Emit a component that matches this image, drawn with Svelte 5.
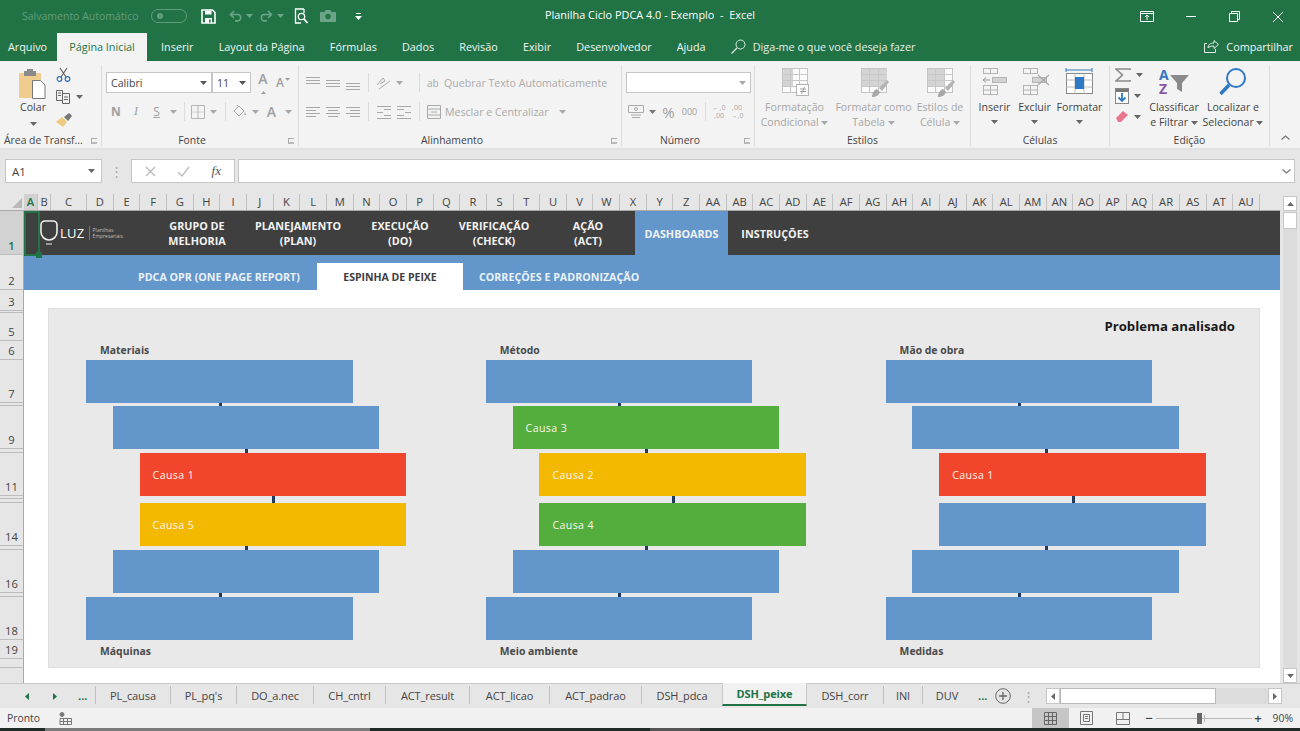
<script>
  const tabs = ['Inserir', 'Layout da Página', 'Fórmulas', 'Dados', 'Revisão', 'Exibir', 'Desenvolvedor', 'Ajuda'];

  const letters = 'ABCDEFGHIJKLMNOPQRSTUVWXYZ'.split('');
  const columns = [...letters, ...letters.slice(0, 21).map((l) => 'A' + l)];

  const rows = [
    { n: 1, h: 44, sel: true }, { n: 2, h: 35 }, { n: 3, h: 21 }, { n: '', h: 2 }, { n: 5, h: 28 },
    { n: 6, h: 19 }, { n: 7, h: 43 }, { n: '', h: 3 }, { n: 9, h: 43 }, { n: '', h: 4 }, { n: 11, h: 43 },
    { n: '', h: 3 }, { n: '', h: 4 }, { n: 14, h: 43 }, { n: '', h: 4 }, { n: 16, h: 43 }, { n: '', h: 4 },
    { n: 18, h: 43 }, { n: 19, h: 19 }, { n: '', h: 9 }
  ];

  const navItems = [
    ['GRUPO DE', 'MELHORIA'], ['PLANEJAMENTO', '(PLAN)'], ['EXECUÇÃO', '(DO)'],
    ['VERIFICAÇÃO', '(CHECK)'], ['AÇÃO', '(ACT)']
  ];

  // gap = px between this bar and the previous one, lvl = how far it is indented
  const levels = [
    { lvl: 0, gap: 0 }, { lvl: 1, gap: 3, tick: 0 }, { lvl: 2, gap: 4, tick: 1 },
    { lvl: 2, gap: 7, tick: 2 }, { lvl: 1, gap: 4, tick: 1 }, { lvl: 0, gap: 4, tick: 0 }
  ];
  const INDENT = 26.8;

  const fishbone = [
    { top: 'Materiais', bottom: 'Máquinas', causes: { 2: ['Causa 1', 'red'], 3: ['Causa 5', 'yellow'] } },
    { top: 'Método', bottom: 'Meio ambiente', causes: { 1: ['Causa 3', 'green'], 2: ['Causa 2', 'yellow'], 3: ['Causa 4', 'green'] } },
    { top: 'Mão de obra', bottom: 'Medidas', causes: { 2: ['Causa 1', 'red'] } }
  ];

  const sheets = [
    ['PL_causa', 75], ["PL_pq's", 66], ['DO_a.nec', 77], ['CH_cntrl', 72], ['ACT_result', 84], ['ACT_licao', 80],
    ['ACT_padrao', 92], ['DSH_pdca', 81], ['DSH_peixe', 85, true], ['DSH_corr', 76], ['INI', 39], ['DUV', 49]
  ];
</script>

{#snippet caret(c = '#a8a8a8')}
  <svg width="7" height="4" viewBox="0 0 7 4"><path d="M0 0h7L3.500 4z" fill={c} /></svg>
{/snippet}

{#snippet lines(ws, y0 = 2)}
  <svg width="16" height="14" viewBox="0 0 16 14" fill="none" stroke="#a8a8a8">
    {#each ws as w, i}
      <path d={`M${w[0]} ${y0 + i * 3 + 0.5}H${w[1]}`} />
    {/each}
  </svg>
{/snippet}

{#snippet tableIcon(fill, brush)}
  <svg width="30" height="32" viewBox="0 0 30 32" fill="none">
    <rect x="2.500" y="1.500" width="25" height="24" fill="#fbfbfb" stroke="#c4c4c4" />
    <rect x="3" y="2" width={fill} height="17" fill="#d4d4d4" />
    <path d="M2.500 7.500h25M2.500 13.500h25M2.500 19.500h25M10.500 1.500v24M19.500 1.500v24" stroke="#c8c8c8" />
    {#if brush}
      <path d="M13 30c0-4 2-7 5-8l3 3c-1 3-4 5-8 5z" fill="#a8a8a8" /><path d="M20 21l8-8 2 2-7 9z" fill="#b4b4b4" />
    {:else}
      <rect x="16.500" y="17.500" width="12" height="11" fill="#fff" stroke="#b4b4b4" />
      <path d="M20 22h6M20 24.500h6M24.500 20l-3 7" stroke="#9c9c9c" />
    {/if}
  </svg>
{/snippet}

{#snippet cellsIcon(kind)}
  <svg width="30" height="30" viewBox="0 0 30 30" fill="none" stroke="#b4b4b4">
    <rect x="3.500" y="1.500" width="14" height="5" />
    <path d="M10.500 1.500v5" />
    <rect x="3.500" y="18.500" width="14" height="9" />
    <path d="M3.500 23h14M10.500 18.500v9" />
    <rect x="12.500" y="10.500" width="14" height="5" fill="#d2d2d2" />
    {#if kind === 'ins'}
      <path d="M3 13h7M6 10.500L3 13l3 2.500" stroke="#999" />
    {:else}
      <path d="M18 8l11 10M29 8L18 18" stroke="#aaa" stroke-width="1.300" />
    {/if}
  </svg>
{/snippet}

<div class="app">
  <header class="titlebar">
    <div class="qat">
      <span class="autosave">Salvamento Automático</span>
      <span class="toggle"><i></i></span>
      <svg class="save" width="15" height="15" viewBox="0 0 15 15"><path d="M1 1h10.500L14 3.500V14H1z" fill="none" stroke="#fff" stroke-width="1.600" /><path d="M4 1.500h6.500v4H4zM4 9h7v5H4z" fill="#fff" /><rect x="8" y="10.500" width="1.600" height="3" fill="#217346" /></svg>
      <svg class="undo" width="13" height="12" viewBox="0 0 13 12" fill="none" stroke="#6ba587" stroke-width="1.600"><path d="M5 1L1.500 4.500 5 8M2 4.500h6.500a3.200 3.200 0 010 6.400H6" /></svg>
      <span class="qcaret">{@render caret('#6ba587')}</span>
      <svg class="redo" width="13" height="12" viewBox="0 0 13 12" fill="none" stroke="#6ba587" stroke-width="1.600"><path d="M8 1l3.500 3.500L8 8M11 4.500H4.500a3.200 3.200 0 000 6.400H7" /></svg>
      <span class="qcaret">{@render caret('#6ba587')}</span>
      <svg class="preview" width="15" height="17" viewBox="0 0 15 17" fill="none" stroke="#fff" stroke-width="1.300"><path d="M10 1H1.500v14H7M10 1v4" /><circle cx="7.500" cy="8.500" r="3.200" /><path d="M10 11l3.500 4" stroke-width="1.800" /></svg>
      <svg class="camera" width="16" height="12" viewBox="0 0 16 12"><path d="M0 2h4.500l1-2h5l1 2H16v10H0z" fill="#6ba587" /><circle cx="8" cy="6.500" r="2.700" fill="#217346" /></svg>
      <svg class="more" width="7" height="7" viewBox="0 0 7 7"><path d="M1 .500h5" stroke="#fff" /><path d="M0 3h7L3.500 7z" fill="#fff" /></svg>
    </div>
    <div class="doc-title">Planilha Ciclo PDCA 4.0 - Exemplo &nbsp;-&nbsp; Excel</div>
    <div class="win">
      <svg width="14" height="11" viewBox="0 0 14 11" fill="none" stroke="#fff"><path d="M.5.500h13v10H.5zM.5 2.500h13" /><path d="M7 9V4M5 6l2-2 2 2" /></svg>
      <svg width="11" height="11" viewBox="0 0 11 11"><path d="M0 5.500h10" stroke="#fff" /></svg>
      <svg width="11" height="11" viewBox="0 0 11 11" fill="none" stroke="#fff"><path d="M.5 2.500h8v8h-8zM2.500 2.500v-2h8v8h-2" /></svg>
      <svg width="12" height="12" viewBox="0 0 12 12"><path d="M1 1l10 10M11 1L1 11" stroke="#fff" /></svg>
    </div>
  </header>

  <nav class="tabbar">
    <span class="tab file">Arquivo</span>
    <span class="tab active">Página Inicial</span>
    {#each tabs as t}
      <span class="tab">{t}</span>
    {/each}
    <svg class="search" width="15" height="15" viewBox="0 0 15 15" fill="none" stroke="#dfeae4"><circle cx="9.500" cy="5.500" r="4.500" /><path d="M6 9l-5.500 5.500" stroke-width="1.300" /></svg>
    <span class="tell">Diga-me o que você deseja fazer</span>
    <span class="share">
      <svg width="15" height="14" viewBox="0 0 15 14" fill="none" stroke="#dfeae4"><path d="M3 4.500H.5v9h11V10" /><path d="M4 9c0-3 2-5 6-5V1.500l4.500 4-4.500 4V7C7 7 5 7.500 4 9z" /></svg>
      Compartilhar
    </span>
  </nav>

  <section class="ribbon">
    <div class="group g-clip">
      <div class="body clip-body">
        <div class="paste">
          <svg width="28" height="30" viewBox="0 0 28 30"><rect x="0" y="4" width="22" height="25" rx="1" fill="#efcd8e" /><rect x="5" y="2" width="12" height="5" fill="#8a8a8a" /><rect x="8" y="0" width="6" height="3" fill="#8a8a8a" /><path d="M13.500 11.500h8l4.500 4.500v13.500H13.500z" fill="#fff" stroke="#777" /></svg>
          <span class="dark">Colar</span>
          {@render caret('#666')}
        </div>
        <div class="clip-tools">
          <svg width="15" height="15" viewBox="0 0 15 15" fill="none"><path d="M4 1l6 9M11 1L5 10" stroke="#666" stroke-width="1.200" /><circle cx="3.500" cy="12" r="2.300" stroke="#2f6fb5" stroke-width="1.200" /><circle cx="11.500" cy="12" r="2.300" stroke="#2f6fb5" stroke-width="1.200" /></svg>
          <span class="with-caret">
            <svg width="15" height="14" viewBox="0 0 15 14" fill="none" stroke="#666"><path d="M.5.500h6v10h-6zM6.500 3.500h7v10h-7zM2 3h3M2 5.500h3M8 7h4M8 9.500h4" /></svg>
            {@render caret('#666')}
          </span>
          <svg width="17" height="15" viewBox="0 0 17 15"><path d="M0 10l6-5 5 5-4 5z" fill="#eec97f" /><path d="M8 5l5-4 3 3-4 5z" fill="#777" /></svg>
        </div>
      </div>
      <div class="label">Área de Transf...<i class="launch"></i></div>
    </div>

    <div class="group g-font">
      <div class="body stack">
        <div class="line first">
          <span class="select font-name">Calibri {@render caret('#555')}</span>
          <span class="select font-size">11 {@render caret('#555')}</span>
          <span class="grow-a big">A<svg width="5" height="3" viewBox="0 0 7 4"><path d="M0 4h7L3.500 0z" fill="#a0a0a0" /></svg></span>
          <span class="grow-a small">A<svg width="5" height="3" viewBox="0 0 7 4"><path d="M0 0h7L3.500 4z" fill="#a0a0a0" /></svg></span>
        </div>
        <div class="line">
          <b class="w20 tool bold">N</b>
          <i class="w20 tool ital">I</i>
          <u class="w21 tool">S</u>
          <span class="w12 tool">{@render caret()}</span>
          <span class="w10 tool"><em class="sep"></em></span>
          <span class="w18 tool"><svg width="14" height="14" viewBox="0 0 14 14" fill="none" stroke="#b4b4b4"><path d="M.5.500h13v13H.5zM7 .500v13" /><path d="M.5 7h13" stroke-dasharray="1 1" /></svg></span>
          <span class="w13 tool">{@render caret()}</span>
          <span class="w10 tool"><em class="sep"></em></span>
          <span class="w19 tool"><svg width="16" height="15" viewBox="0 0 16 15" fill="none"><path d="M2 7l5-5 5 5-5 5z" stroke="#aaa" /><path d="M5 1l2 2" stroke="#aaa" /><path d="M13 8l1.500 3h-3z" fill="#bbb" /></svg></span>
          <span class="w12 tool">{@render caret()}</span>
          <span class="w21 tool letter-a">A</span>
          <span class="w12 tool">{@render caret()}</span>
        </div>
      </div>
      <div class="label off">Fonte<i class="launch"></i></div>
    </div>

    <div class="group g-align">
      <div class="body stack">
        <div class="line first-mid">
          <span class="w20 tool">{@render lines([[1, 15], [1, 15], [1, 15]], 1)}</span>
          <span class="w20 tool">{@render lines([[1, 15], [1, 15], [1, 15]], 4)}</span>
          <span class="w20 tool">{@render lines([[1, 15], [1, 15], [1, 15]], 7)}</span>
          <span class="w10 tool"><em class="sep"></em></span>
          <span class="w20 tool"><svg width="16" height="15" viewBox="0 0 16 15" fill="none" stroke="#aaa"><path d="M2 10l6-7 2 3-5 3M4 14L15 6" /></svg></span>
          <span class="w12 tool">{@render caret()}</span>
          <span class="w9 tool"></span>
          <span class="w10 tool"><em class="sep"></em></span>
          <span class="wrap"><span class="ab">ab</span> Quebrar Texto Automaticamente</span>
        </div>
        <div class="line mid">
          <span class="w20 tool">{@render lines([[1, 15], [1, 11], [1, 15], [1, 11]])}</span>
          <span class="w20 tool">{@render lines([[1, 15], [3, 13], [1, 15], [3, 13]])}</span>
          <span class="w20 tool">{@render lines([[1, 15], [5, 15], [1, 15], [5, 15]])}</span>
          <span class="w10 tool"><em class="sep"></em></span>
          <span class="w21 tool">{@render lines([[1, 15], [8, 15], [1, 7], [8, 15], [1, 15]], 1)}</span>
          <span class="w20 tool">{@render lines([[1, 15], [1, 8], [9, 15], [1, 8], [1, 15]], 1)}</span>
          <span class="w10 tool"><em class="sep"></em></span>
          <span class="wrap">
            <svg width="14" height="14" viewBox="0 0 14 14" fill="none" stroke="#aaa"><path d="M.5.500h13v13H.5zM.5 4h13M.5 10h13M4 7h6" /></svg>
            Mesclar e Centralizar <span class="merge-caret">{@render caret()}</span>
          </span>
        </div>
      </div>
      <div class="label off">Alinhamento<i class="launch"></i></div>
    </div>

    <div class="group g-num">
      <div class="body stack">
        <div class="line first">
          <span class="select num-format">{@render caret()}</span>
        </div>
        <div class="line">
          <span class="w20 tool"><svg width="16" height="14" viewBox="0 0 16 14" fill="none" stroke="#aaa"><path d="M.5.500h15v7H.5zM3 10h10M4 12.500h8" /><circle cx="8" cy="4" r="1.500" /></svg></span>
          <span class="w12 tool">{@render caret('#777')}</span>
          <span class="w21 tool pct">%</span>
          <span class="w21 tool thou">000</span>
          <span class="w10 tool"><em class="sep"></em></span>
          <span class="w18 tool dec">←,0<br />,00</span>
          <span class="w18 tool dec">,00<br />→,0</span>
        </div>
      </div>
      <div class="label off">Número<i class="launch"></i></div>
    </div>

    <div class="group g-styles">
      <div class="body big-row">
        <div class="big f-cond">
          <div class="ico">{@render tableIcon(10, false)}</div>
          <span>Formatação<br />Condicional <span class="cr">{@render caret()}</span></span>
        </div>
        <div class="big f-table">
          <div class="ico">{@render tableIcon(25, true)}</div>
          <span>Formatar como<br />Tabela <span class="cr">{@render caret()}</span></span>
        </div>
        <div class="big f-cell">
          <div class="ico">{@render tableIcon(17, true)}</div>
          <span>Estilos de<br />Célula <span class="cr">{@render caret()}</span></span>
        </div>
      </div>
      <div class="label">Estilos</div>
    </div>

    <div class="group g-cells">
      <div class="body big-row">
        <div class="big on c-ins">
          <div class="ico">{@render cellsIcon('ins')}</div>
          <span>Inserir</span>
          <div class="drop">{@render caret('#666')}</div>
        </div>
        <div class="big on c-del">
          <div class="ico">{@render cellsIcon('del')}</div>
          <span>Excluir</span>
          <div class="drop">{@render caret('#666')}</div>
        </div>
        <div class="big on c-fmt">
          <div class="ico">
            <svg width="30" height="30" viewBox="0 0 30 30" fill="none">
              <path d="M1 3h26M1 1v4M27 1v4" stroke="#2f78c4" />
              <rect x="1.500" y="6.500" width="26" height="20" fill="#fff" stroke="#888" />
              <path d="M1.500 13h26M1.500 20h26M10 6.500v20M19 6.500v20" stroke="#bbb" />
              <rect x="10" y="10" width="9" height="12" fill="#2f78c4" />
            </svg>
          </div>
          <span>Formatar</span>
          <div class="drop">{@render caret('#666')}</div>
        </div>
      </div>
      <div class="label">Células</div>
    </div>

    <div class="group g-edit">
      <div class="body edit-body">
        <div class="edit-tools">
          <span class="with-caret"><svg width="16" height="14" viewBox="0 0 16 14" fill="none" stroke="#8c8c8c" stroke-width="1.700"><path d="M15 2V1H1l6.500 6L1 13h14v-1" /></svg>{@render caret('#666')}</span>
          <span class="with-caret"><svg width="14" height="16" viewBox="0 0 14 16"><rect x=".5" y=".5" width="13" height="15" fill="#fff" stroke="#888" /><rect x="1" y="1" width="12" height="3" fill="#777" /><path d="M7 5v8M3.500 9.500L7 13l3.500-3.500" fill="none" stroke="#2f78c4" stroke-width="1.800" /></svg>{@render caret('#666')}</span>
          <span class="with-caret"><svg width="14" height="13" viewBox="0 0 14 13"><path d="M1 8l7-7 5 4-7 7H3z" fill="#e8768f" /></svg>{@render caret('#666')}</span>
        </div>
        <div class="big on e-sort">
          <div class="ico sort">
            <span class="az a">A</span>
            <span class="az z">Z</span>
            <svg width="19" height="17" viewBox="0 0 19 17"><path d="M0 0h19l-7 8v9l-5-3V8z" fill="#8a8a8a" /></svg>
          </div>
          <span>Classificar<br />e Filtrar <span class="cr">{@render caret('#666')}</span></span>
        </div>
        <div class="big on e-find">
          <div class="ico">
            <svg width="30" height="30" viewBox="0 0 30 30" fill="none" stroke="#2f78c4"><circle cx="18" cy="11" r="9" stroke-width="2" /><path d="M11 18L2.500 27" stroke-width="3.500" /></svg>
          </div>
          <span>Localizar e<br />Selecionar <span class="cr">{@render caret('#666')}</span></span>
        </div>
      </div>
      <div class="label">Edição</div>
    </div>

    <div class="collapse">
      <svg width="9" height="5" viewBox="0 0 9 5" fill="none" stroke="#777" stroke-width="1.300"><path d="M.5 4.500l4-3.500 4 3.500" /></svg>
    </div>
  </section>

  <section class="formula">
    <div class="namebox">A1 {@render caret('#666')}</div>
    <span class="dots">⋮</span>
    <div class="fxbox">
      <svg width="11" height="11" viewBox="0 0 11 11"><path d="M1 1l9 9M10 1l-9 9" stroke="#bbb" stroke-width="1.300" /></svg>
      <svg width="13" height="11" viewBox="0 0 13 11" fill="none"><path d="M1 6l4 4 7-9" stroke="#bbb" stroke-width="1.300" /></svg>
      <span class="fx">fx</span>
    </div>
    <div class="input">
      <svg width="9" height="5" viewBox="0 0 9 5" fill="none" stroke="#777" stroke-width="1.300"><path d="M.5.500l4 3.500 4-3.500" /></svg>
    </div>
  </section>

  <section class="grid-area">
    <div class="grid-main">
      <div class="col-headers">
        <div class="corner"><svg width="10" height="10" viewBox="0 0 10 10"><path d="M10 0v10H0z" fill="#b8b8b8" /></svg></div>
        {#each columns as c, i}
          <span class="col" class:col-a={i === 0} class:col-b={i === 1} class:col-c={i === 2}>{c}</span>
        {/each}
      </div>
      <div class="grid-body">
        <div class="row-headers">
          {#each rows as r}
            <div class="rh" class:sel={r.sel} style="height:{r.h}px">{r.n}</div>
          {/each}
        </div>
        <div class="sheet">
          <div class="cell-cursor"><i></i></div>
          <div class="mainnav">
            <div class="logo">
              <svg width="18" height="28" viewBox="0 0 18 28" fill="none" stroke="#f1f1f1" stroke-width="1.600">
                <path d="M5 2h8a4 4 0 014 4v7a8 8 0 01-16 0V6a4 4 0 014-4z" />
                <path d="M6 25h6" stroke="#999" stroke-width="2" />
              </svg>
              <span class="luz">LUZ</span>
              <span class="logo-sub">Planilhas<br />Empresariais</span>
            </div>
            {#each navItems as item}
              <div class="navitem">{item[0]}<br />{item[1]}</div>
            {/each}
            <div class="navitem current">DASHBOARDS</div>
            <div class="navitem">INSTRUÇÕES</div>
          </div>
          <div class="subnav">
            <div class="subitem first">PDCA OPR (ONE PAGE REPORT)</div>
            <div class="subitem current">ESPINHA DE PEIXE</div>
            <div class="subitem last">CORREÇÕES E PADRONIZAÇÃO</div>
          </div>
          <div class="content">
            <div class="panel">
              <div class="problem">Problema analisado</div>
              <div class="bones">
                {#each fishbone as col}
                  <div class="bone">
                    <div class="bone-title">{col.top}</div>
                    {#each levels as l, i}
                      {#if l.gap}
                        <div class="gap" style="height:{l.gap}px">
                          <i style="margin-left:{l.tick * INDENT + 132.5}px"></i>
                        </div>
                      {/if}
                      <div class="bar {col.causes[i]?.[1] ?? ''}" style="margin-left:{l.lvl * INDENT}px">
                        {col.causes[i]?.[0] ?? ''}
                      </div>
                    {/each}
                    <div class="bone-title bottom">{col.bottom}</div>
                  </div>
                {/each}
              </div>
            </div>
          </div>
        </div>
      </div>
    </div>
    <div class="vscroll">
      <span class="vbtn"><svg width="7" height="4" viewBox="0 0 7 4"><path d="M0 4h7L3.500 0z" fill="#666" /></svg></span>
      <span class="vthumb"></span>
      <span class="vtrack"></span>
      <span class="vbtn"><svg width="7" height="4" viewBox="0 0 7 4"><path d="M0 0h7L3.500 4z" fill="#666" /></svg></span>
    </div>
  </section>

  <section class="sheetbar">
    <div class="sheet-nav">
      <svg width="4" height="7" viewBox="0 0 4 7"><path d="M4 0v7L0 3.500z" fill="#217346" /></svg>
      <svg width="4" height="7" viewBox="0 0 4 7"><path d="M0 0v7l4-3.500z" fill="#217346" /></svg>
      <span class="ell">...</span>
    </div>
    {#each sheets as s}
      <div class="sheet-tab" class:on={s[2]} style="width:{s[1]}px">{s[0]}</div>
    {/each}
    <span class="ell after">...</span>
    <svg class="add" width="16" height="16" viewBox="0 0 16 16" fill="none" stroke="#666"><circle cx="8" cy="8" r="7.300" /><path d="M8 4v8M4 8h8" stroke-width="1.300" /></svg>
    <span class="dots small">⋮</span>
    <div class="hscroll">
      <span class="hbtn"><svg width="4" height="7" viewBox="0 0 4 7"><path d="M4 0v7L0 3.500z" fill="#666" /></svg></span>
      <span class="hthumb"></span>
      <span class="htrack"></span>
      <span class="hbtn"><svg width="4" height="7" viewBox="0 0 4 7"><path d="M0 0v7l4-3.500z" fill="#666" /></svg></span>
    </div>
  </section>

  <footer class="status">
    <span class="ready">Pronto</span>
    <svg width="13" height="13" viewBox="0 0 13 13" fill="none" stroke="#777"><circle cx="3" cy="2.500" r="2" fill="#777" /><path d="M1 6.500h11.500v6H1zM4.500 6.500v6M8.500 6.500v6M1 9.500h11.500" /></svg>
    <div class="views">
      <span class="view on"><svg width="13" height="13" viewBox="0 0 13 13" fill="none" stroke="#666"><path d="M.5.500h12v12H.5zM4.500.500v12M8.500.500v12M.5 4.500h12M.5 8.500h12" /></svg></span>
      <span class="view"><svg width="13" height="14" viewBox="0 0 13 14" fill="none" stroke="#777"><path d="M.5.500h12v13H.5zM3.500 3.500h6v7h-6zM5 5.500h3M5 7.500h3" /></svg></span>
      <span class="view"><svg width="14" height="13" viewBox="0 0 14 13" fill="none" stroke="#777"><path d="M.5.500h13v12H.5zM.5 7.500h13M7 .500v7" /></svg></span>
    </div>
    <div class="zoom">
      <span class="pm">−</span>
      <span class="slider"><i class="mid-tick"></i><i class="knob"></i></span>
      <span class="pm">+</span>
      <span class="pct-label">90%</span>
    </div>
  </footer>
  <div class="strip"><i></i><b></b></div>
</div>

<style>
  :global(body) {
    margin: 0;
    background: #1f2b27;
  }
  .app {
    width: 1300px;
    height: 731px;
    overflow: hidden;
    display: flex;
    flex-direction: column;
    font-family: "Open Sans", "Noto Sans", sans-serif;
    font-size: 11px;
    color: #444;
    background: #e6e6e6;
  }

  /* title bar */
  .titlebar {
    height: 33px;
    flex: none;
    background: #217346;
    display: flex;
    align-items: center;
    position: relative;
    color: #fff;
  }
  .qat {
    display: flex;
    align-items: center;
    padding: 0 0 1px 22px;
  }
  .autosave {
    width: 129px;
    color: #619c7d;
    font-size: 10.5px;
    white-space: nowrap;
  }
  .toggle {
    width: 36px;
    height: 14px;
    border: 1px solid #619c7d;
    border-radius: 8px;
    display: flex;
    align-items: center;
    padding-left: 5px;
    box-sizing: border-box;
  }
  .toggle i {
    width: 6px;
    height: 6px;
    border-radius: 50%;
    background: #619c7d;
  }
  .save { margin-left: 14px; }
  .undo { margin-left: 13px; }
  .qcaret { margin-left: 4px; display: flex; }
  .redo { margin-left: 7px; }
  .preview { margin-left: 10px; }
  .camera { margin-left: 11px; }
  .more { margin-left: 19px; }
  .doc-title {
    position: absolute;
    left: 0;
    right: 0;
    top: 7px;
    text-align: center;
    font-size: 10.9px;
    line-height: 15px;
  }
  .win {
    margin-left: auto;
    display: flex;
    align-items: center;
    gap: 32px;
    padding-right: 16px;
  }

  /* tabs */
  .tabbar {
    height: 28px;
    flex: none;
    box-sizing: border-box;
    background: #217346;
    color: #f1f6f3;
    display: flex;
    align-items: stretch;
    font-size: 10.8px;
    padding-left: 8px;
  }
  .tab {
    display: flex;
    align-items: center;
    margin-right: 25.2px;
    padding-bottom: 2px;
    white-space: nowrap;
  }
  .tab.file { margin-right: 10px; }
  .tab.active {
    background: #f3f3f3;
    color: #217346;
    width: 90px;
    justify-content: center;
    margin-right: 14px;
  }
  .search {
    align-self: center;
    margin: -2px 7px 0 0;
  }
  .tell {
    align-self: center;
    color: #e5efe9;
    margin-top: -2px;
  }
  .share {
    margin: -2px 0 0 auto;
    align-self: center;
    padding-right: 7px;
    display: flex;
    align-items: center;
    gap: 7px;
  }

  /* ribbon */
  .ribbon {
    height: 87px;
    flex: none;
    background: #f3f3f3;
    display: flex;
    border-bottom: 2px solid #e1e1e1;
    box-sizing: content-box;
    color: #a6a6a6;
    font-size: 10.6px;
  }
  .group {
    display: flex;
    flex-direction: column;
    box-sizing: border-box;
    position: relative;
    margin: 4px 0 2px;
    border-right: 1px solid #dcdcdc;
  }
  .body { flex: 1; min-height: 0; }
  .label {
    height: 11px;
    line-height: 11px;
    text-align: center;
    color: #444;
    font-size: 10.4px;
    white-space: nowrap;
  }
  .label.off { padding-right: 16px; }
  .launch {
    position: absolute;
    right: 4px;
    bottom: 2px;
    width: 6px;
    height: 6px;
    border-left: 1px solid #aaa;
    border-top: 1px solid #aaa;
    box-sizing: border-box;
    border-bottom: 2px solid #bbb;
  }
  .g-clip { width: 102px; }
  .g-font { width: 197px; }
  .g-align { width: 323px; }
  .g-num { width: 133px; }
  .g-styles { width: 216px; }
  .g-cells { width: 139px; }
  .g-edit { width: 160px; }
  .g-clip .label { text-align: left; padding-left: 4px; }

  .clip-body { display: flex; }
  .paste {
    width: 56px;
    padding: 4px 0 0 10px;
    display: flex;
    flex-direction: column;
    align-items: center;
    box-sizing: border-box;
  }
  .dark { color: #444; }
  .paste .dark { line-height: 14px; margin: 1px 0 8px; }
  .clip-tools {
    display: flex;
    flex-direction: column;
    padding-top: 2px;
    gap: 8px;
  }
  .with-caret {
    display: flex;
    align-items: center;
    gap: 5px;
  }

  .stack {
    display: flex;
    flex-direction: column;
    padding: 7px 0 0 4px;
  }
  .line {
    display: flex;
    align-items: center;
    height: 21px;
  }
  .line + .line { margin-top: 8px; }
  .select {
    height: 21px;
    box-sizing: border-box;
    background: #fff;
    border: 1px solid #c6c6c6;
    display: flex;
    align-items: center;
    justify-content: space-between;
    padding: 0 4px;
    color: #444;
    font-size: 10.6px;
  }
  .font-name { width: 106px; }
  .font-size { width: 39px; }
  .grow-a {
    color: #a0a0a0;
    font-size: 14px;
    font-weight: 600;
    width: 20px;
    display: flex;
    align-items: flex-start;
    justify-content: center;
    gap: 1px;
  }
  .grow-a svg { margin-top: 4px; }
  .grow-a.big { margin-left: 2px; }
  .grow-a.small { font-size: 12px; }
  .tool {
    display: flex;
    align-items: center;
    justify-content: center;
    flex: none;
    color: #a0a0a0;
    font-style: normal;
    font-size: 12px;
  }
  .bold { font-weight: 700; }
  .ital { font-style: italic; font-family: "Liberation Serif", serif; }
  .letter-a { font-size: 14px; font-weight: 600; }
  .w9 { width: 9px; }
  .w10 { width: 10px; }
  .w12 { width: 12px; }
  .w13 { width: 13px; }
  .w18 { width: 18px; }
  .w19 { width: 19px; }
  .w20 { width: 20px; }
  .w21 { width: 21px; }
  .sep {
    width: 1px;
    height: 19px;
    background: #dcdcdc;
  }
  .wrap {
    display: flex;
    align-items: center;
    gap: 4px;
    margin-left: 3px;
    white-space: nowrap;
    color: #aaa;
    font-size: 10.6px;
  }
  .ab { font-size: 10px; width: 13px; }
  .merge-caret { margin-left: 6px; display: flex; }
  .num-format {
    width: 125px;
    justify-content: flex-end;
  }
  .pct { font-size: 15px; }
  .thou { font-size: 9px; }
  .dec { font-size: 7px; line-height: 8px; color: #aaa; text-align: center; }

  .big-row {
    display: flex;
    padding-top: 2px;
  }
  .big {
    display: flex;
    flex-direction: column;
    align-items: center;
    text-align: center;
    line-height: 15px;
    white-space: nowrap;
    flex: none;
  }
  .ico {
    height: 33px;
    flex: none;
  }
  .big.on { color: #444; }
  .drop { display: flex; margin-top: 5px; }
  .cr { display: inline-flex; vertical-align: middle; }
  .f-cond { width: 79px; }
  .f-table { width: 79px; }
  .f-cell { width: 54px; }
  .c-ins { width: 43px; margin-left: 2px; }
  .c-del { width: 37px; }
  .c-fmt { width: 53px; }

  .edit-body { display: flex; padding-top: 2px; }
  .edit-tools {
    width: 36px;
    padding: 1px 0 0 5px;
    box-sizing: border-box;
    display: flex;
    flex-direction: column;
    gap: 6px;
    flex: none;
  }
  .e-sort { width: 56px; }
  .e-find { width: 62px; }
  .sort {
    width: 32px;
    position: relative;
  }
  .sort svg {
    position: absolute;
    left: 12px;
    top: 8px;
  }
  .az {
    position: absolute;
    left: 1px;
    font-size: 14px;
    font-weight: 700;
    line-height: 14px;
  }
  .az.a { top: 1px; color: #2f78c4; }
  .az.z { top: 15px; color: #8b57a8; }
  .collapse {
    flex: 1;
    display: flex;
    align-items: flex-end;
    justify-content: flex-end;
    padding: 0 10px 8px 0;
  }

  /* formula bar */
  .formula {
    height: 45px;
    flex: none;
    display: flex;
    align-items: flex-start;
    padding: 9px 5px 0;
    box-sizing: border-box;
    background: #e6e6e6;
  }
  .namebox {
    width: 97px;
    height: 24px;
    box-sizing: border-box;
    border: 1px solid #c6c6c6;
    background: #fff;
    display: flex;
    align-items: center;
    justify-content: space-between;
    padding: 0 6px;
    font-size: 11.5px;
  }
  .dots {
    width: 29px;
    text-align: center;
    color: #aaa;
    line-height: 24px;
    font-size: 13px;
  }
  .fxbox {
    width: 104px;
    height: 24px;
    box-sizing: border-box;
    border: 1px solid #c6c6c6;
    background: #fff;
    display: flex;
    align-items: center;
    justify-content: space-between;
    padding: 0 13px;
  }
  .fx {
    font-family: "Liberation Serif", serif;
    font-style: italic;
    font-size: 13px;
    color: #555;
  }
  .input {
    flex: 1;
    margin-left: 3px;
    height: 24px;
    box-sizing: border-box;
    border: 1px solid #c6c6c6;
    background: #fff;
    display: flex;
    align-items: center;
    justify-content: flex-end;
    padding-right: 3px;
  }

  /* grid */
  .grid-area {
    flex: none;
    height: 488px;
    display: flex;
  }
  .grid-main {
    width: 1280px;
    display: flex;
    flex-direction: column;
  }
  .col-headers {
    height: 16px;
    flex: none;
    display: flex;
    background: #e6e6e6;
    border-bottom: 1px solid #a9a9a9;
    box-sizing: content-box;
    margin-top: -1px;
  }
  .corner {
    width: 24px;
    flex: none;
    display: flex;
    justify-content: flex-end;
    align-items: flex-end;
    padding: 0 2px 2px 0;
    box-sizing: border-box;
  }
  .col {
    width: 26.67px;
    flex: none;
    box-sizing: border-box;
    text-align: center;
    border-right: 1px solid #c2c2c2;
    font-size: 11.2px;
    line-height: 16px;
    color: #444;
  }
  .col-a {
    width: 14px;
    background: #d2d2d2;
    color: #217346;
    font-weight: 600;
  }
  .col-b { width: 13px; }
  .col-c { width: 36px; }
  .grid-body {
    flex: 1;
    min-height: 0;
    display: flex;
  }
  .row-headers {
    width: 24px;
    flex: none;
    background: #e6e6e6;
    border-right: 1px solid #a9a9a9;
    box-sizing: border-box;
    overflow: hidden;
  }
  .rh {
    box-sizing: border-box;
    border-bottom: 1px solid #bdbdbd;
    display: flex;
    align-items: flex-end;
    justify-content: center;
    font-size: 11.2px;
    line-height: 17px;
    overflow: hidden;
  }
  .rh.sel {
    background: #d2d2d2;
    color: #217346;
    font-weight: 600;
  }

  .sheet {
    flex: 1;
    min-width: 0;
    position: relative;
    display: flex;
    flex-direction: column;
    background: #fff;
  }
  .cell-cursor {
    position: absolute;
    left: 0;
    top: 0;
    width: 16px;
    height: 45px;
    box-sizing: border-box;
    border: 2px solid #217346;
  }
  .cell-cursor i {
    position: absolute;
    right: -4px;
    bottom: -4px;
    width: 6px;
    height: 6px;
    box-sizing: border-box;
    background: #217346;
  }
  .mainnav {
    height: 44px;
    flex: none;
    background: #3f3f3f;
    display: grid;
    grid-template-columns: 127px 92px 110px 94px 94px 94px 93px 94px;
    color: #f2f2f2;
    font-weight: 700;
    font-size: 10.8px;
    line-height: 15px;
  }
  .logo {
    display: flex;
    align-items: center;
    padding-left: 16px;
    color: #fff;
    font-weight: 400;
  }
  .luz {
    font-size: 13px;
    margin-left: 2px;
    padding-right: 4px;
    border-right: 1px solid #777;
    line-height: 14px;
    letter-spacing: 0.3px;
  }
  .logo-sub {
    font-size: 5px;
    line-height: 6px;
    color: #bdbdbd;
    margin-left: 3px;
  }
  .navitem {
    display: flex;
    align-items: center;
    justify-content: center;
    text-align: center;
  }
  .navitem.current { background: #6397cb; }
  .subnav {
    height: 35px;
    flex: none;
    background: #6397cb;
    display: flex;
    align-items: stretch;
    padding-top: 8px;
    box-sizing: border-box;
    color: #e9f1f9;
    font-weight: 700;
    font-size: 10.7px;
  }
  .subitem {
    display: flex;
    align-items: center;
    white-space: nowrap;
  }
  .subitem.first { width: 293px; padding-left: 114px; box-sizing: border-box; }
  .subitem.current {
    width: 146px;
    background: #fff;
    color: #404040;
    justify-content: center;
    font-size: 10.5px;
  }
  .subitem.last { padding-left: 16px; }

  .content {
    flex: 1;
    min-height: 0;
    padding: 18px 20px 15px 24px;
  }
  .panel {
    height: 360px;
    box-sizing: border-box;
    background: #e9e9e9;
    border: 1px solid #dedede;
    padding-left: 37px;
    position: relative;
  }
  .problem {
    height: 32px;
    box-sizing: border-box;
    padding: 8px 24px 0 0;
    text-align: right;
    font-weight: 700;
    font-size: 13.2px;
    line-height: 19px;
    color: #1a1a1a;
  }
  .bones {
    display: grid;
    grid-template-columns: repeat(3, 320px);
    column-gap: 79.8px;
  }
  .bone-title {
    height: 19px;
    line-height: 19px;
    padding-left: 14px;
    font-weight: 700;
    font-size: 10.4px;
    color: #4a4a4a;
  }
  .bone-title.bottom { height: 21px; line-height: 22px; }
  .bar {
    width: 266.6px;
    height: 43px;
    background: #6397cb;
    display: flex;
    align-items: center;
    padding-left: 13px;
    box-sizing: border-box;
    color: #fdf4ea;
    font-size: 10.6px;
    letter-spacing: 0.4px;
  }
  .bar.red { background: #f2462c; }
  .bar.yellow { background: #f3b900; }
  .bar.green { background: #53ae3e; }
  .gap i {
    display: block;
    width: 3px;
    height: 100%;
    background: #1f3a5f;
  }

  /* vertical scrollbar */
  .vscroll {
    flex: 1;
    display: flex;
    flex-direction: column;
    padding: 1px 3px 0;
    background: #e6e6e6;
  }
  .vbtn {
    height: 13px;
    flex: none;
    background: #fff;
    border: 1px solid #c6c6c6;
    display: flex;
    align-items: center;
    justify-content: center;
  }
  .vthumb {
    height: 15px;
    flex: none;
    background: #fff;
    border: 1px solid #c6c6c6;
    margin-top: 1px;
  }
  .vtrack { flex: 1; background: #dcdcdc; }

  /* sheet tabs */
  .sheetbar {
    height: 25px;
    flex: none;
    display: flex;
    align-items: stretch;
    background: #e6e6e6;
    border-top: 1px solid #c9c9c9;
    box-sizing: border-box;
    font-size: 11px;
    position: relative;
  }
  .sheet-nav {
    width: 95px;
    flex: none;
    display: flex;
    align-items: center;
    padding-left: 25px;
    box-sizing: border-box;
    gap: 24px;
  }
  .ell {
    color: #217346;
    font-weight: 700;
    font-size: 11px;
    line-height: 12px;
  }
  .sheet-nav .ell { margin-left: -3px; }
  .ell.after { align-self: center; margin-left: 7px; width: 17px; }
  .sheet-tab {
    flex: none;
    display: flex;
    align-items: center;
    justify-content: center;
    box-sizing: border-box;
    margin: 2px 0 4px;
    border-left: 1px solid #bfbfbf;
    white-space: nowrap;
    letter-spacing: -0.1px;
  }
  .sheet-tab.on {
    margin: -1px 0 2px;
    background: #f1f1f1;
    border-left: 1px solid #c9c9c9;
    border-right: 1px solid #c9c9c9;
    border-bottom: 2px solid #217346;
    color: #217346;
    font-weight: 700;
  }
  .sheet-tab.on + .sheet-tab { border-left: none; }
  .add { align-self: center; }
  .dots.small { width: 35px; align-self: center; line-height: 16px; }
  .hscroll {
    width: 236px;
    flex: none;
    margin: 4px 0;
    display: flex;
    align-items: stretch;
  }
  .hbtn {
    width: 14px;
    flex: none;
    box-sizing: border-box;
    background: #fff;
    border: 1px solid #c6c6c6;
    display: flex;
    align-items: center;
    justify-content: center;
  }
  .hthumb {
    width: 156px;
    flex: none;
    background: #fff;
    border: 1px solid #b9b9b9;
    box-sizing: border-box;
  }
  .htrack { flex: 1; background: #dcdcdc; }

  /* status bar */
  .status {
    height: 20px;
    flex: none;
    display: flex;
    align-items: center;
    background: #f1f1f1;
    padding-left: 7px;
    font-size: 10.4px;
  }
  .ready { width: 52px; }
  .views {
    margin-left: auto;
    display: flex;
    align-self: stretch;
  }
  .view {
    width: 36.5px;
    display: flex;
    align-items: center;
    justify-content: center;
  }
  .view.on { background: #c6c6c6; }
  .zoom {
    display: flex;
    align-items: center;
    margin-left: 2px;
    padding-right: 7px;
  }
  .pm { width: 11px; text-align: center; font-size: 13px; font-weight: 600; }
  .slider {
    width: 96px;
    height: 1px;
    background: #b4b4b4;
    margin: 0 1px;
    position: relative;
  }
  .mid-tick {
    position: absolute;
    left: 48px;
    top: -3px;
    width: 1px;
    height: 7px;
    background: #b4b4b4;
  }
  .knob {
    position: absolute;
    left: 41px;
    top: -5px;
    width: 5px;
    height: 11px;
    background: #666;
  }
  .pct-label { margin-left: 9px; }

  .strip {
    flex: 1;
    display: flex;
    background: #1f2b27;
  }
  .strip i {
    width: 325px;
    margin-left: 45px;
    background: #7b7b7b;
  }
  .strip b {
    width: 50px;
    margin-left: 280px;
    background: #555;
  }
</style>
